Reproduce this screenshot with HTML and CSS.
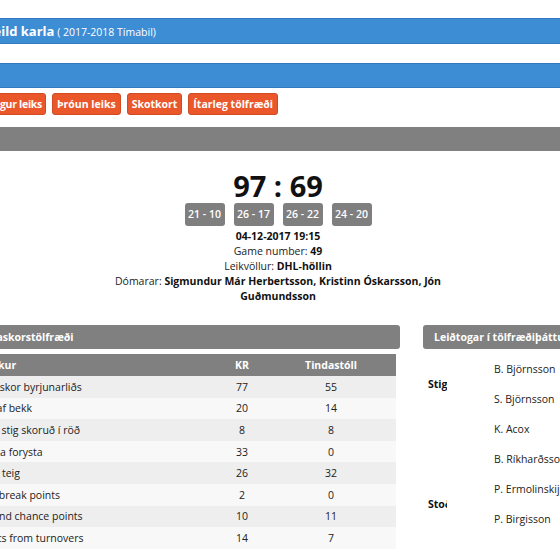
FILE: index.html
```html
<!DOCTYPE html>
<html lang="is">
<head>
<meta charset="utf-8">
<title>Leikskýrsla</title>
<link rel="stylesheet" href="styles.css">
</head>
<body>
<div class="page">
  <div class="league-bar">
    <span class="league-title">Domino's deild karla</span> <span class="league-season">( 2017-2018 Tímabil)</span>
  </div>
  <div class="nav-bar"></div>
  <div class="tabs">
    <a class="tab tab-first">Gangur leiks</a>
    <a class="tab">Þróun leiks</a>
    <a class="tab">Skotkort</a>
    <a class="tab">Ítarleg tölfræði</a>
  </div>
  <div class="section-bar"></div>

  <div class="scoreboard">
    <div class="score">97 : 69</div>
    <div class="quarters">
      <span class="quarter">21 - 10</span>
      <span class="quarter">26 - 17</span>
      <span class="quarter">26 - 22</span>
      <span class="quarter">24 - 20</span>
    </div>
    <div class="info">
      <div class="info-line"><b>04-12-2017 19:15</b></div>
      <div class="info-line">Game number: <b>49</b></div>
      <div class="info-line">Leikvöllur: <b>DHL-höllin</b></div>
      <div class="info-line">Dómarar: <b>Sigmundur Már Herbertsson, Kristinn Óskarsson, Jón Guðmundsson</b></div>
    </div>
  </div>

  <div class="stats-row">
    <div class="col-left">
      <div class="panel-head panel-head-left">Stigaskorstölfræði</div>
      <table class="stat-table">
        <colgroup><col class="c-label"><col class="c-kr"><col class="c-tin"></colgroup>
        <thead>
          <tr><th class="th-label">Flokkur</th><th>KR</th><th>Tindastóll</th></tr>
        </thead>
        <tbody>
          <tr><td class="td-label">Stigaskor byrjunarliðs</td><td>77</td><td>55</td></tr>
          <tr><td class="td-label">Stig af bekk</td><td>20</td><td>14</td></tr>
          <tr><td class="td-label">Flest stig skoruð í röð</td><td>8</td><td>8</td></tr>
          <tr><td class="td-label">Mesta forysta</td><td>33</td><td>0</td></tr>
          <tr><td class="td-label">Stig í teig</td><td>26</td><td>32</td></tr>
          <tr><td class="td-label">Fast break points</td><td>2</td><td>0</td></tr>
          <tr><td class="td-label">Second chance points</td><td>10</td><td>11</td></tr>
          <tr><td class="td-label">Points from turnovers</td><td>14</td><td>7</td></tr>
        </tbody>
      </table>
    </div>
    <div class="col-right">
      <div class="panel-head panel-head-right">Leiðtogar í tölfræðiþáttum</div>
      <div class="leaders">
        <div class="leader-group">
          <div class="leader-label"><span class="clip">Stig</span></div>
          <div class="leader-names">
            <div class="leader-name">B. Björnsson</div>
            <div class="leader-name">S. Björnsson</div>
          </div>
        </div>
        <div class="leader-group">
          <div class="leader-label"></div>
          <div class="leader-names">
            <div class="leader-name">K. Acox</div>
            <div class="leader-name">B. Ríkharðsson</div>
          </div>
        </div>
        <div class="leader-group">
          <div class="leader-label"><span class="clip">Stoðsendingar</span></div>
          <div class="leader-names">
            <div class="leader-name">P. Ermolinskij</div>
            <div class="leader-name">P. Birgisson</div>
          </div>
        </div>
      </div>
    </div>
  </div>
</div>
</body>
</html>
```
FILE: styles.css
```css
html, body {
  margin: 0;
  padding: 0;
  background: #ffffff;
}
body {
  width: 560px;
  height: 560px;
  overflow: hidden;
  font-family: "Open Sans", "Liberation Sans", sans-serif;
  font-size: 10.5px;
  color: #222222;
}
.page {
  padding-top: 18px;
}
.league-bar {
  height: 24px;
  background: #3d8dd5;
  border-top: 1px solid #3479bd;
  border-bottom: 1px solid #3479bd;
  color: #ffffff;
  line-height: 24px;
  white-space: nowrap;
}
.league-title {
  display: inline-block;
  margin-left: -79px;
  font-size: 13px;
  font-weight: 700;
}
.league-season {
  font-size: 10.5px;
}
.nav-bar {
  margin-top: 19px;
  height: 23px;
  background: #3d8dd5;
  border-top: 1px solid #3479bd;
  border-bottom: 1px solid #3479bd;
}
.tabs {
  display: flex;
  gap: 6px;
  margin-top: 5px;
  height: 22px;
  white-space: nowrap;
}
.tab {
  display: block;
  box-sizing: border-box;
  height: 22px;
  line-height: 20px;
  padding: 0 4px;
  background: #e9572b;
  border: 1px solid #d24a22;
  border-radius: 3px;
  color: #ffffff;
  font-weight: 700;
  font-size: 10.5px;
}
.tab-first {
  margin-left: -25px;
  padding-right: 3px;
  letter-spacing: -0.3px;
}
.section-bar {
  margin-top: 12px;
  height: 24px;
  background: #808080;
}
.scoreboard {
  width: 556px;
  display: flex;
  flex-direction: column;
  align-items: center;
}
.score {
  margin-top: 19px;
  font-size: 29px;
  line-height: 32px;
  font-weight: 700;
  color: #111111;
}
.quarters {
  display: flex;
  gap: 9px;
  margin-top: 1px;
}
.quarter {
  display: block;
  width: 40px;
  height: 23px;
  line-height: 23px;
  text-align: center;
  background: #7f7f7f;
  border-radius: 3px;
  color: #ffffff;
  font-size: 10.5px;
  font-weight: 600;
}
.info {
  width: 336px;
  margin-top: 3px;
  text-align: center;
  line-height: 15px;
  color: #222222;
}
.info b {
  color: #111111;
}
.stats-row {
  display: flex;
  margin-top: 21px;
  margin-left: -40px;
}
.col-left {
  width: 440px;
  flex: none;
}
.col-right {
  margin-left: 23px;
  width: 200px;
  flex: none;
}
.panel-head {
  height: 24px;
  line-height: 24px;
  background: #808080;
  border-radius: 3px;
  color: #ffffff;
  font-weight: 700;
  white-space: nowrap;
}
.panel-head-left {
  padding-left: 17px;
}
.panel-head-right {
  padding-left: 11px;
}
.stat-table {
  margin-top: 5px;
  width: 436px;
  table-layout: fixed;
  border-collapse: collapse;
  border-spacing: 0;
}
.c-label { width: 258px; }
.c-kr { width: 48px; }
.c-tin { width: 130px; }
.stat-table th {
  height: 22px;
  padding: 0;
  background: #808080;
  color: #ffffff;
  font-weight: 700;
  text-align: center;
}
.stat-table th.th-label {
  text-align: left;
  padding-left: 16px;
}
.stat-table td {
  height: 21.6px;
  padding: 0;
  text-align: center;
  color: #222222;
  white-space: nowrap;
}
.stat-table td.td-label {
  text-align: left;
  padding-left: 16px;
}
.stat-table tbody tr:nth-child(odd) td {
  background: #eeeeee;
}
.stat-table tbody tr:nth-child(even) td {
  background: #f8f8f8;
}
.leaders {
  margin-top: 5px;
}
.leader-group {
  display: flex;
  align-items: center;
}
.leader-label {
  width: 66px;
  padding-left: 5px;
  flex: none;
  font-weight: 700;
  color: #111111;
}
.clip {
  display: block;
  width: 18.5px;
  overflow: hidden;
  white-space: nowrap;
}
.leader-names {
  flex: 1;
}
.leader-name {
  height: 30px;
  line-height: 30px;
  white-space: nowrap;
}
```
